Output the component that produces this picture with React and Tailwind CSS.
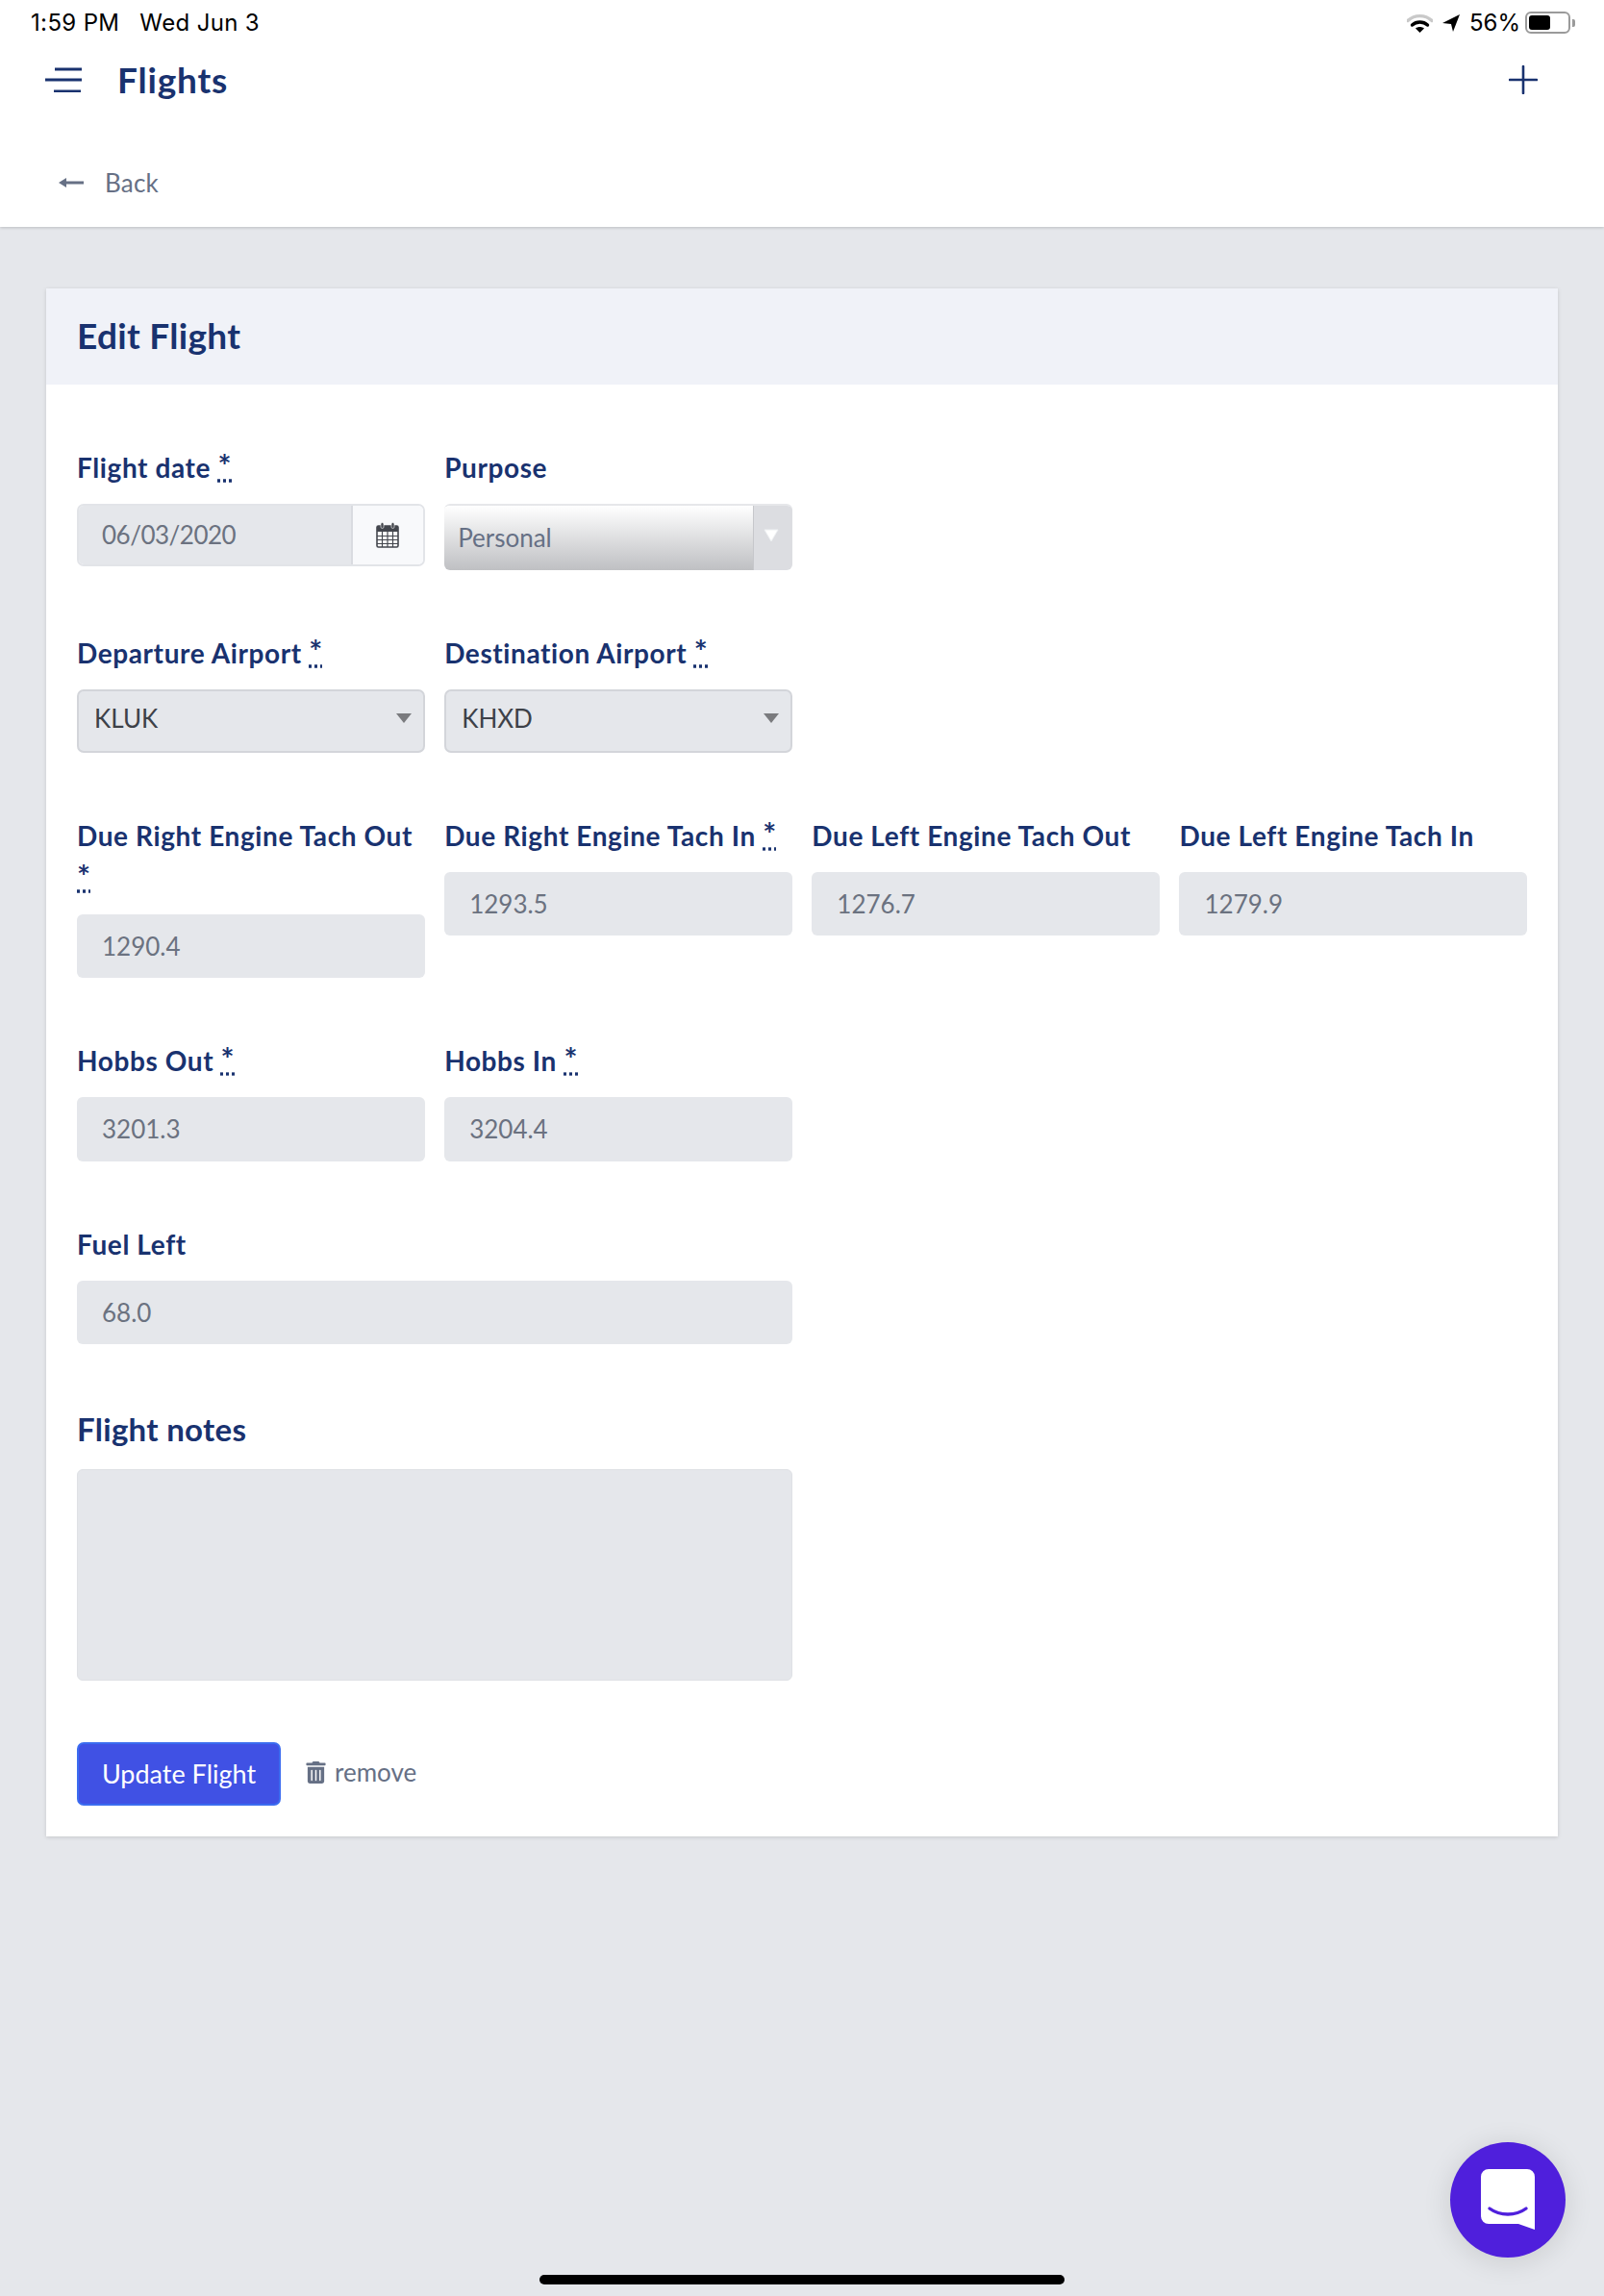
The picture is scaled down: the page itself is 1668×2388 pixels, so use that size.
import React from "react";
import { FaTrashAlt } from "react-icons/fa";

function Req() {
  return <abbr title="required" className="text-[33px] leading-none">*</abbr>;
}

function Label({ children, req }) {
  return (
    <label className="block mb-[15px] -translate-y-[1.5px] text-[28px] tracking-[0.6px] leading-[44px] font-bold text-[#19326f]">
      {children}
      {req ? " " : null}
      {req ? <Req /> : null}
    </label>
  );
}

function TextField({ label, req, value, h = "h-[66px]", className = "" }) {
  return (
    <div className={className}>
      <Label req={req}>{label}</Label>
      <div className={`${h} flex items-center px-[26px] rounded-[6px] bg-[#e5e7eb] text-[26px] text-[#6b7280]`}>{value}</div>
    </div>
  );
}

function Caret() {
  return (
    <svg width="16" height="10" viewBox="0 0 16 10" className="shrink-0">
      <path d="M0 0H16L8 10Z" fill="#7a7b7e" />
    </svg>
  );
}

function NativeSelect({ label, value }) {
  return (
    <div>
      <Label req>{label}</Label>
      <div className="h-[66px] flex items-center justify-between pl-[16px] pr-[12px] rounded-[7px] bg-[#e5e7eb] border-2 border-[#d3d5da] text-[26px] text-[#3d4148]">
        <span className="-mt-[5px]">{value}</span>
        <span className="-mt-[6px]"><Caret /></span>
      </div>
    </div>
  );
}

function CalendarIcon() {
  return (
    <svg width="24" height="27" viewBox="0 0 24 27" fill="none">
      <rect x="1" y="4" width="22" height="22" rx="1.5" fill="#fff" stroke="#43464d" strokeWidth="1.6" />
      <rect x="1" y="4" width="22" height="6" fill="#43464d" />
      <rect x="5" y="0.5" width="3" height="6" rx="1.5" fill="#43464d" stroke="#fff" strokeWidth="0.6" />
      <rect x="16" y="0.5" width="3" height="6" rx="1.5" fill="#43464d" stroke="#fff" strokeWidth="0.6" />
      <path d="M6.5 10v16M12 10v16M17.5 10v16M1 14.5h22M1 18.5h22M1 22.5h22" stroke="#43464d" strokeWidth="1.2" />
    </svg>
  );
}

export default function App() {
  return (
    <div className="relative min-h-[2388px] overflow-hidden bg-[#e5e7eb] font-['Lato',sans-serif]">
      <header className="bg-white h-[236px] shadow-[0_1px_3px_rgba(0,0,0,0.18)]">
        <div className="h-[46px] pt-[1px] flex items-center justify-between pl-[32px] pr-[30px] font-['Inter',sans-serif] text-[24px] text-black">
          <div className="flex gap-[21px] tracking-[0.35px]">
            <span>1:59 PM</span>
            <span>Wed Jun 3</span>
          </div>
          <div className="flex items-center">
            <svg width="27" height="20" viewBox="0 0 27 20" className="mr-[10px]">
              <path d="M1 7.5C8 1 19 1 26 7.5" fill="none" stroke="#c9c9c9" strokeWidth="3.4" strokeLinecap="round" />
              <path d="M5.5 12C10 8 17 8 21.5 12" fill="none" stroke="#000" strokeWidth="3.4" strokeLinecap="round" />
              <path d="M13.5 20L9 15.5C11.5 13.5 15.5 13.5 18 15.5Z" fill="#000" />
            </svg>
            <svg width="18" height="20" viewBox="0 0 18 20" className="mr-[10px]">
              <path d="M0 10L18 1L11 19L9 11Z" fill="#000" />
            </svg>
            <span className="mr-[5px]">56%</span>
            <span className="w-[47px] h-[23px] rounded-[6px] border-2 border-[#9a9a9a] p-[2px] flex">
              <span className="w-[22px] rounded-[3px] bg-black" />
            </span>
            <span className="ml-[2px] w-[3px] h-[8px] rounded-r-[2px] bg-[#9a9a9a]" />
          </div>
        </div>
        <div className="h-[74px] flex items-center justify-between pl-[47px] pr-[69px]">
          <div className="flex items-center">
            <svg width="38" height="26" viewBox="0 0 38 26" className="mr-[37px]">
              <path d="M10 2H38M0 13H38M9 25H37" stroke="#19326f" strokeWidth="2.8" />
            </svg>
            <h1 className="text-[37px] tracking-[0.8px] font-bold text-[#19326f]">Flights</h1>
          </div>
          <svg width="30" height="30" viewBox="0 0 30 30">
            <path d="M15 1V29M1 15H29" stroke="#19326f" strokeWidth="2.6" strokeLinecap="round" />
          </svg>
        </div>
        <div className="flex items-center pl-[61px] pt-[48px]">
          <svg width="26" height="14" viewBox="0 0 26 14" className="mr-[22px]">
            <path d="M0 7L8 2V5.5H26V8.5H8V12Z" fill="#667085" />
          </svg>
          <span className="text-[26px] tracking-[0.2px] leading-[44px] text-[#667085]">Back</span>
        </div>
      </header>

      <main className="px-[48px] pt-[64px]">
        <section className="bg-white shadow-[0_1px_4px_rgba(0,0,0,0.14)]">
          <div className="h-[100px] flex items-center px-[32px] pb-[3px] bg-[#f0f2f8]">
            <h2 className="text-[37px] tracking-[0.3px] font-bold text-[#19326f]">Edit Flight</h2>
          </div>
          <div className="px-[32px] pt-[65px] pb-[32px]">
            <div className="grid grid-cols-4 gap-x-[20.67px] gap-y-[65px] items-start">
              <div>
                <Label req>Flight date</Label>
                <div className="h-[65px] flex rounded-[7px] border-2 border-[#e2e4e8] overflow-hidden">
                  <div className="flex-1 flex items-center pl-[24px] bg-[#e5e7eb] text-[26px] tracking-[-0.5px] text-[#6b7280]">06/03/2020</div>
                  <div className="w-[75px] flex items-center justify-center bg-[#f8f9fb] border-l-2 border-[#d9dbe0]">
                    <CalendarIcon />
                  </div>
                </div>
              </div>
              <div>
                <Label>Purpose</Label>
                <div className="h-[69px] flex rounded-[6px] border-t-2 border-[#e6e7ea] overflow-hidden">
                  <div className="flex-1 flex items-center pl-[14px] bg-gradient-to-b from-[#ffffff] to-[#bfc0c3] text-[26px] text-[#667085]">Personal</div>
                  <div className="w-[41px] pt-[24px] pr-[4px] flex justify-center bg-[#dcdde1] border-l border-[#c6c7cb]">
                    <svg width="16" height="14" viewBox="0 0 16 14">
                      <path d="M1 1H15L8 13Z" fill="#fff" stroke="#eef0f2" />
                    </svg>
                  </div>
                </div>
              </div>
              <div className="col-span-2" />

              <NativeSelect label="Departure Airport" value="KLUK" />
              <NativeSelect label="Destination Airport" value="KHXD" />
              <div className="col-span-2" />

              <TextField label="Due Right Engine Tach Out" req value="1290.4" />
              <TextField label="Due Right Engine Tach In" req value="1293.5" />
              <TextField label="Due Left Engine Tach Out" value="1276.7" />
              <TextField label="Due Left Engine Tach In" value="1279.9" />

              <TextField label="Hobbs Out" req value="3201.3" h="h-[67px]" />
              <TextField label="Hobbs In" req value="3204.4" h="h-[67px]" />
              <div className="col-span-2" />

              <TextField label="Fuel Left" value="68.0" className="col-span-2" />
              <div className="col-span-2" />

              <div className="col-span-2">
                <label className="block mb-[17px] -translate-y-[1.5px] text-[33px] tracking-[0.3px] leading-[48px] font-bold text-[#19326f]">Flight notes</label>
                <div className="h-[220px] rounded-[6px] bg-[#e5e7eb] border border-[#dfe1e5]" />
              </div>
            </div>
            <div className="mt-[64px] flex items-center">
              <button className="w-[212px] h-[66px] rounded-[7px] bg-[#4051e4] border-2 border-[#3b6cf0] text-[27px] text-white">Update Flight</button>
              <FaTrashAlt className="ml-[25px] mr-[8px] -mt-[3px] text-[23px] text-[#667085]" />
              <span className="-mt-[3px] text-[26px] text-[#667085]">remove</span>
            </div>
          </div>
        </section>
      </main>

      <button className="absolute left-[1508px] top-[2228px] w-[120px] h-[120px] rounded-full bg-[#4f1fdc] flex items-center justify-center shadow-[0_4px_30px_rgba(0,0,0,0.12)]">
        <svg width="56" height="64" viewBox="0 0 56 64">
          <path d="M8 0H48A8 8 0 0 1 56 8V63L39 57H8A8 8 0 0 1 0 49V8A8 8 0 0 1 8 0Z" fill="#fff" />
          <path d="M9 41C20 49 36 49 47 41" fill="none" stroke="#4f1fdc" strokeWidth="3.4" strokeLinecap="round" />
        </svg>
      </button>

      <div className="absolute left-[561px] top-[2366px] w-[546px] h-[10px] rounded-full bg-black" />
    </div>
  );
}
